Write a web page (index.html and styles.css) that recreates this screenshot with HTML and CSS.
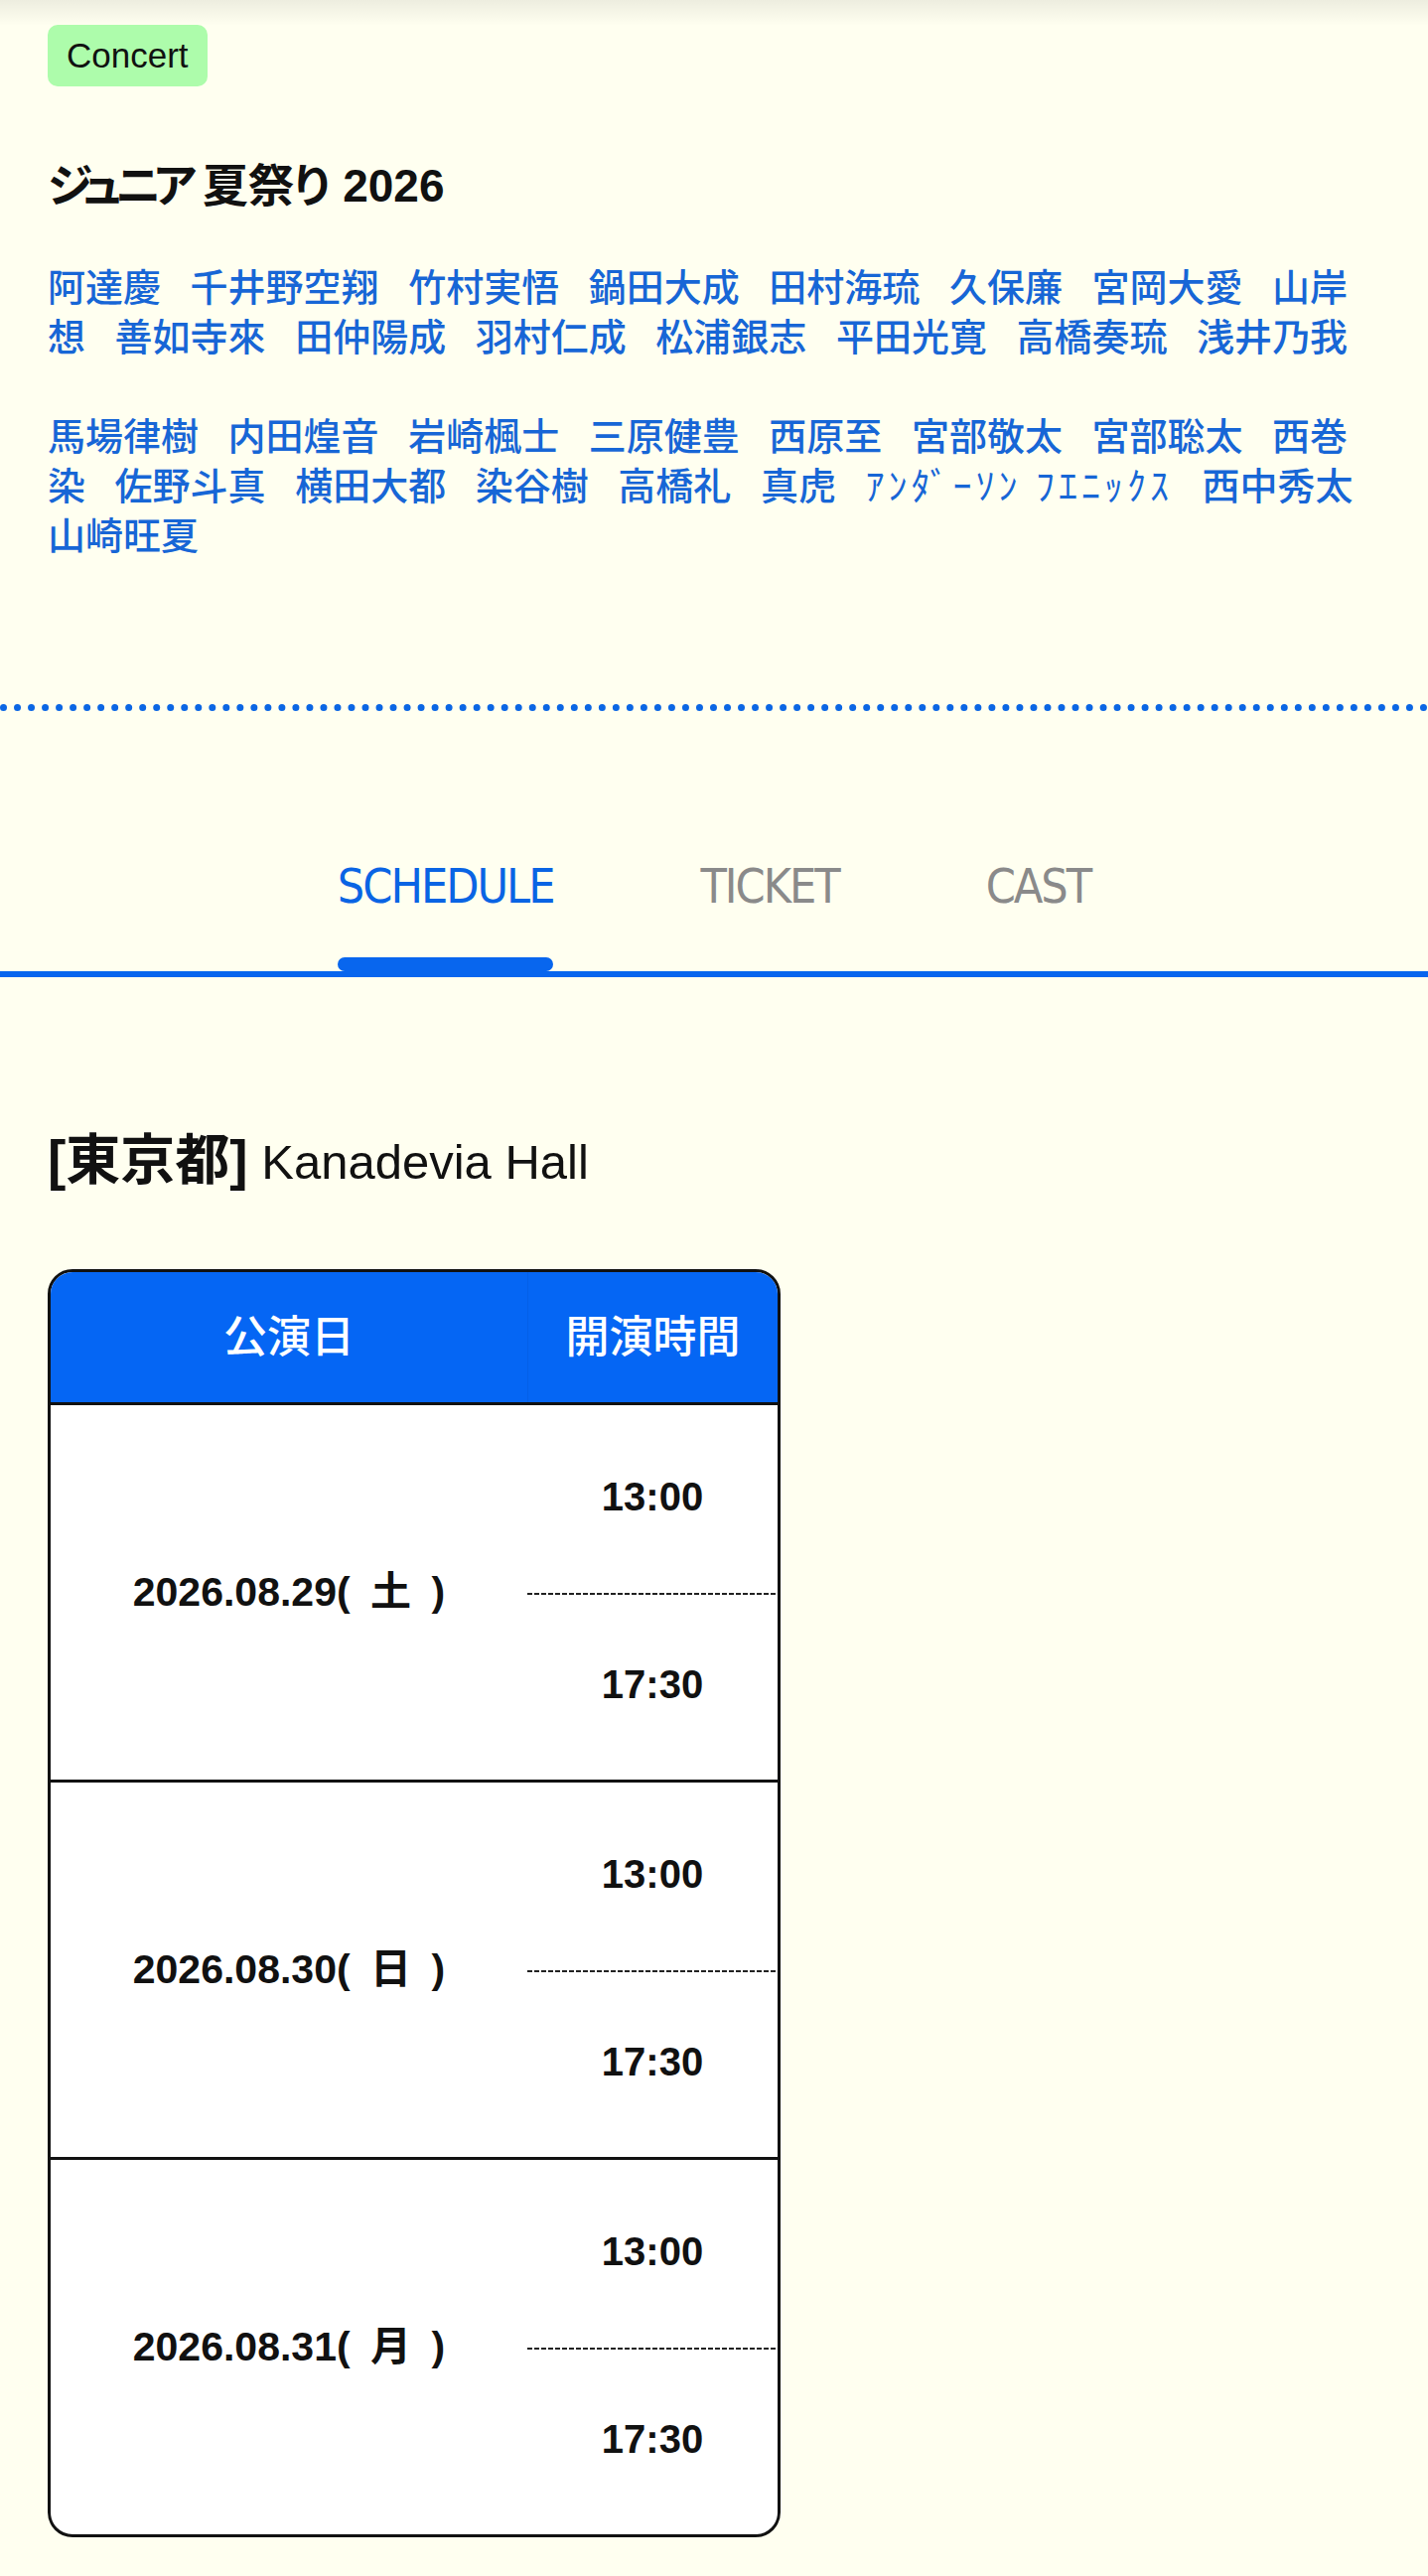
FILE: index.html
```html
<!DOCTYPE html>
<html lang="ja">
<head>
    <meta charset="UTF-8">
    <meta name="viewport" content="width=device-width, initial-scale=1.0">
    <title>ジュニア 夏祭り 2026</title>
    <link rel="stylesheet" href="styles.css">
</head>
<body>
    <div class="info">
        <div class="badge">Concert</div>
        <h1 class="title"><span class="title-kana">ジュニア</span> 夏祭り 2026</h1>
        <p class="names">
            <span>阿達慶</span>
            <span>千井野空翔</span>
            <span>竹村実悟</span>
            <span>鍋田大成</span>
            <span>田村海琉</span>
            <span>久保廉</span>
            <span>宮岡大愛</span>
            <span>山岸想</span>
            <span>善如寺來</span>
            <span>田仲陽成</span>
            <span>羽村仁成</span>
            <span>松浦銀志</span>
            <span>平田光寛</span>
            <span>高橋奏琉</span>
            <span>浅井乃我</span>
        </p>
        <p class="names">
            <span>馬場律樹</span>
            <span>内田煌音</span>
            <span>岩崎楓士</span>
            <span>三原健豊</span>
            <span>西原至</span>
            <span>宮部敬太</span>
            <span>宮部聡太</span>
            <span>西巻染</span>
            <span>佐野斗真</span>
            <span>横田大都</span>
            <span>染谷樹</span>
            <span>高橋礼</span>
            <span>真虎</span>
            <span class="kana">ｱﾝﾀﾞｰｿﾝ ﾌｴﾆｯｸｽ</span>
            <span>西中秀太</span>
            <span>山崎旺夏</span>
        </p>
    </div>

    <div class="divider"></div>

    <nav class="tabs">
        <div class="tab active">SCHEDULE</div>
        <div class="tab">TICKET</div>
        <div class="tab">CAST</div>
    </nav>

    <h2 class="venue"><b>[東京都]</b> Kanadevia Hall</h2>

    <div class="schedule">
        <div class="schedule-head">
            <div>公演日</div>
            <div class="head-time">開演時間</div>
        </div>
        <div class="schedule-row">
            <div class="date">2026.08.29(&ensp;土&ensp;)</div>
            <div class="times">
                <div class="time">13:00</div>
                <div class="time">17:30</div>
            </div>
        </div>
        <div class="schedule-row">
            <div class="date">2026.08.30(&ensp;日&ensp;)</div>
            <div class="times">
                <div class="time">13:00</div>
                <div class="time">17:30</div>
            </div>
        </div>
        <div class="schedule-row">
            <div class="date">2026.08.31(&ensp;月&ensp;)</div>
            <div class="times">
                <div class="time">13:00</div>
                <div class="time">17:30</div>
            </div>
        </div>
    </div>
</body>
</html>
```

FILE: styles.css
```css
body {
    margin: 0;
    padding-bottom: 40px;
    background: #fffff0 linear-gradient(to bottom, rgba(0, 0, 0, 0.07), rgba(0, 0, 0, 0) 26px) no-repeat;
    color: #111;
    font-family: "Liberation Sans", "Noto Sans CJK JP", sans-serif;
}
.info {
    padding: 25px 48px 0;
}
.badge {
    width: fit-content;
    height: 62px;
    padding: 0 19px;
    line-height: 62px;
    font-size: 35px;
    background-color: #adfcab;
    border-radius: 10px;
}
.title {
    margin: 70px 0 0;
    font-size: 46px;
    line-height: 60px;
    font-weight: bold;
    font-feature-settings: "palt";
}
.title-kana {
    letter-spacing: -0.14em;
}
.names {
    margin: 48px 0 0;
    font-size: 38px;
    line-height: 50px;
    font-weight: 500;
    color: #1766d6;
}
.names + .names {
    margin-top: 50px;
}
.names span {
    margin-right: 19px;
}
.names .kana {
    font-weight: normal;
    letter-spacing: 4px;
}
.divider {
    margin-top: 144px;
    border-top: 7px dotted #0b66e4;
}
.tabs {
    display: flex;
    justify-content: center;
    gap: 148px;
    padding-top: 146px;
    border-bottom: 6px solid #0866ee;
}
.tab {
    display: flex;
    flex-direction: column;
    font-family: "Liberation Sans Narrow", "DejaVu Sans Condensed", sans-serif;
    font-size: 48px;
    letter-spacing: -2px;
    line-height: 60px;
    color: #8a8a8a;
}
.tab::after {
    content: "";
    height: 14px;
    margin-top: 42px;
    border-radius: 7px;
}
.tab.active {
    color: #0a64e4;
}
.tab.active::after {
    background-color: #0866ee;
}
.venue {
    margin: 156px 48px 0;
    font-size: 49px;
    line-height: 60px;
    font-weight: normal;
}
.venue b {
    font-size: 55px;
    line-height: 1;
}
.schedule {
    width: 738px;
    box-sizing: border-box;
    margin: 78px 48px 0;
    border: 3px solid #111;
    border-radius: 25px;
    overflow: hidden;
    background-color: #fff;
}
.schedule-head {
    display: grid;
    grid-template-columns: 480px 1fr;
    height: 131px;
    line-height: 131px;
    text-align: center;
    font-size: 44px;
    font-weight: 500;
    color: #fff;
    background-color: #0566f4;
    border-bottom: 3px solid #111;
}
.head-time {
    border-left: 1px solid rgba(0, 0, 0, 0.05);
}
.schedule-row {
    display: grid;
    grid-template-columns: 480px 1fr;
    height: 377px;
}
.schedule-row + .schedule-row {
    border-top: 3px solid #111;
}
.date {
    align-self: center;
    text-align: center;
    font-size: 41px;
    line-height: 1.2;
    font-weight: bold;
}
.times {
    display: flex;
    flex-direction: column;
}
.time {
    flex: 1;
    display: flex;
    align-items: center;
    justify-content: center;
    padding-bottom: 3px;
    font-size: 40px;
    font-weight: bold;
}
.time + .time {
    background: repeating-linear-gradient(90deg, #222 0 5px, transparent 5px 7px) top / 100% 2px no-repeat;
}
```
